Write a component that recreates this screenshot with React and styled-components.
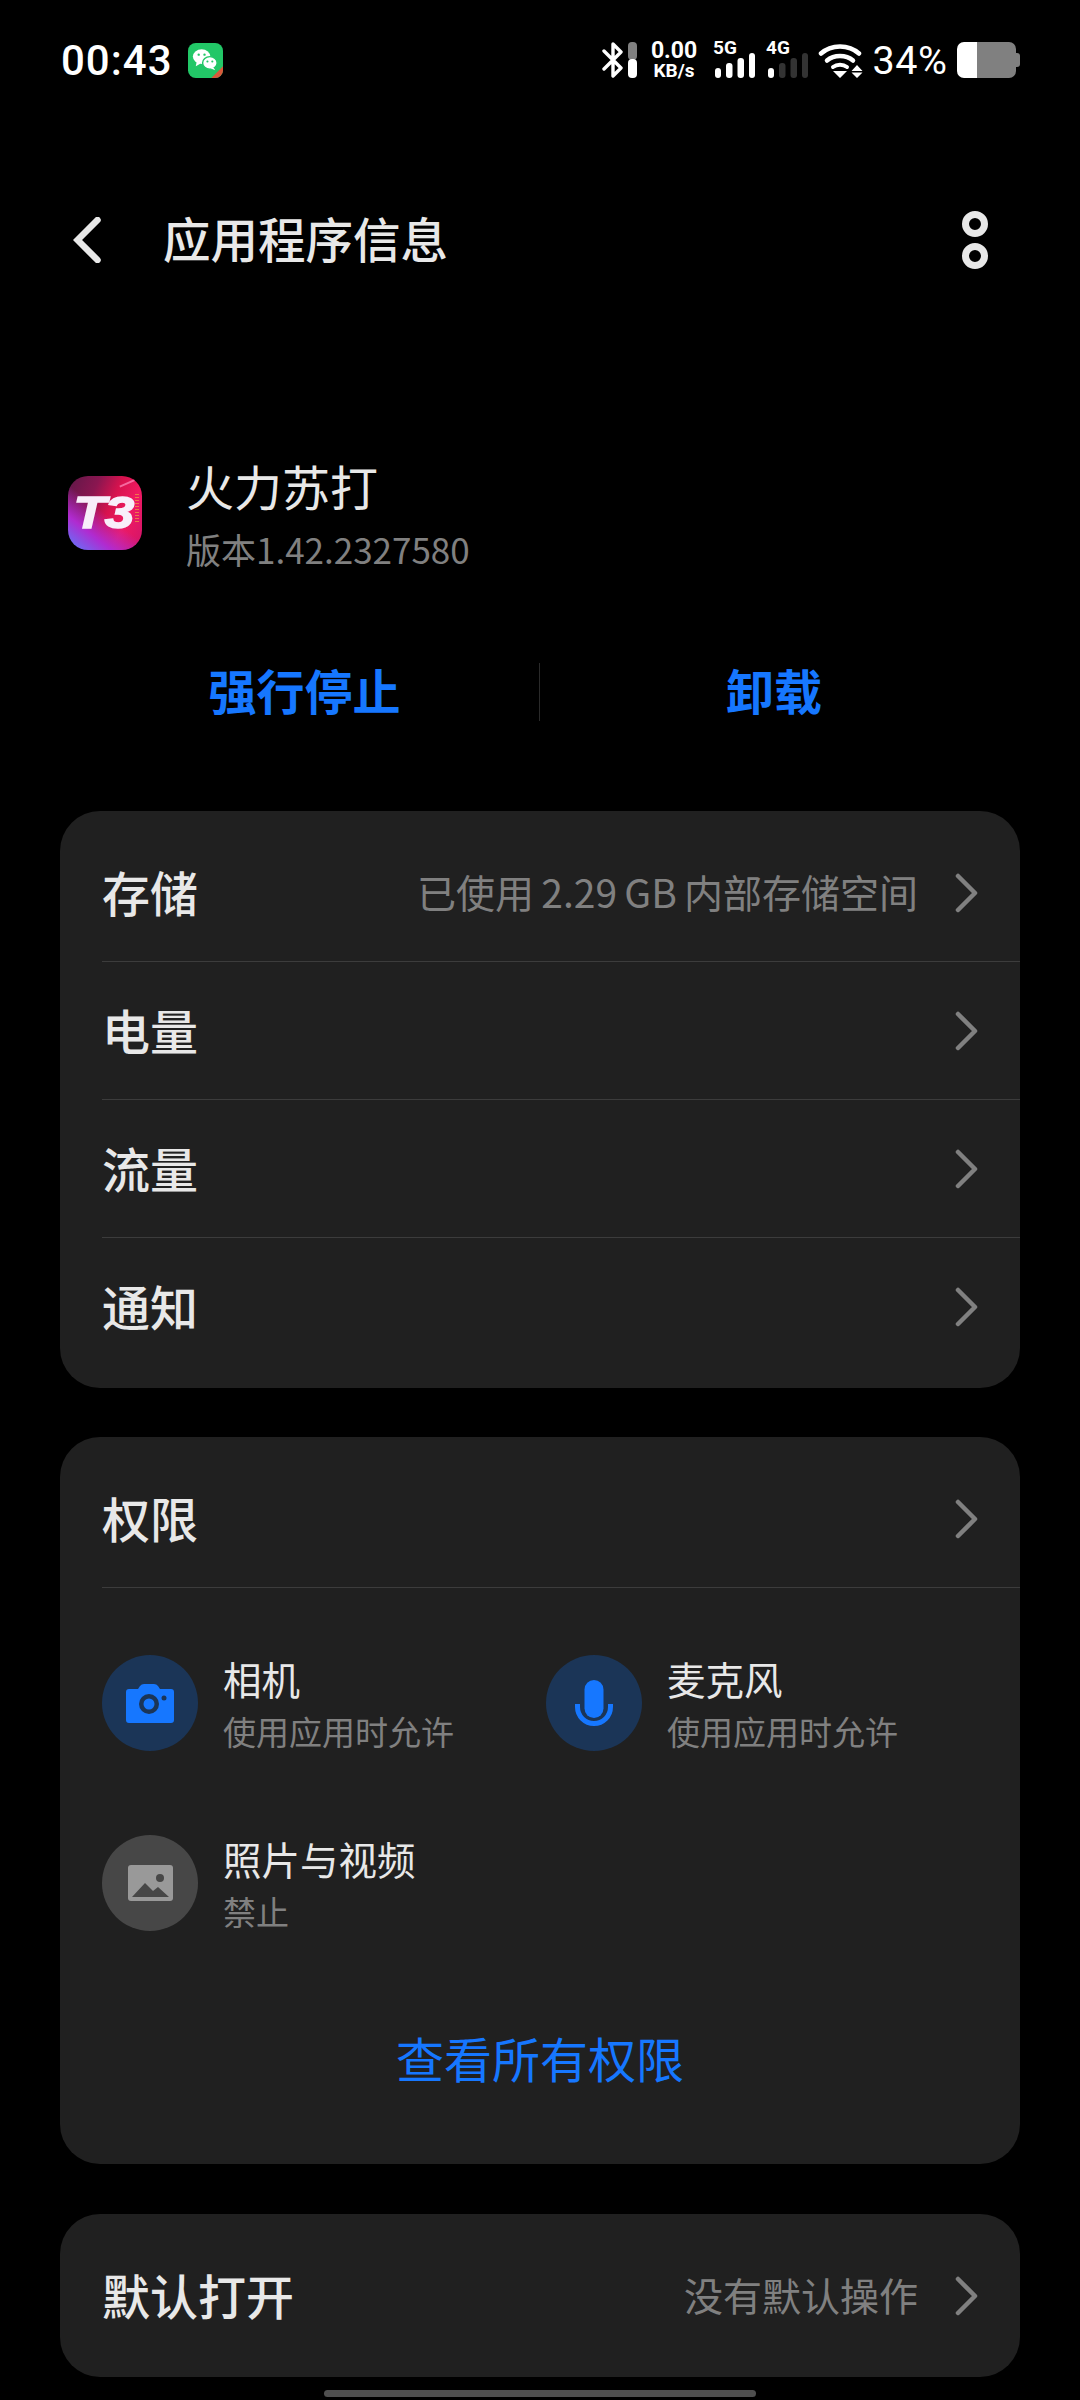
import styled, { createGlobalStyle } from "styled-components";

const CJK = `"Noto Sans CJK SC", "Noto Sans", sans-serif`;
const BLUE = "#1677ff";

const GlobalStyle = createGlobalStyle`
  html, body {
    margin: 0;
    padding: 0;
    background: #000;
  }
  * {
    box-sizing: border-box;
  }
`;

const Page = styled.div`
  position: relative;
  width: 1080px;
  height: 2400px;
  overflow: hidden;
  background: #000;
  color: #e8e8e8;
  font-family: ${CJK};
`;

const StatusBar = styled.div`
  height: 120px;
  padding: 0 60px 0 61px;
  display: flex;
  align-items: center;
`;

const Clock = styled.span`
  font-family: Roboto, sans-serif;
  font-size: 42px;
  font-weight: 500;
  letter-spacing: 1px;
  color: #fff;
`;

const WeChatIcon = styled.svg`
  width: 35px;
  height: 35px;
  margin-left: 15px;
`;

const StatusRight = styled.div`
  margin-left: auto;
  display: flex;
  align-items: center;
`;

const NetSpeed = styled.div`
  width: 46px;
  margin: 0 18px 0 14px;
  display: flex;
  flex-direction: column;
  align-items: center;
  font-family: Roboto, sans-serif;
  font-weight: 700;
  color: #fff;
  span:first-child {
    font-size: 23px;
    line-height: 21px;
  }
  span:last-child {
    font-size: 19px;
    line-height: 19px;
  }
`;

const Signal = styled.div`
  position: relative;
  width: 40px;
  height: 36px;
  margin-right: ${(p) => p.$gap}px;
`;

const SignalLabel = styled.span`
  position: absolute;
  left: -2px;
  top: -3px;
  font-family: Roboto, sans-serif;
  font-size: 19px;
  font-weight: 700;
  line-height: 18px;
  color: #fff;
`;

const SignalBars = styled.svg`
  position: absolute;
  left: 0;
  bottom: 0;
  width: 40px;
  height: 25px;
`;

const Percent = styled.span`
  width: 94px;
  text-align: center;
  font-family: Roboto, sans-serif;
  font-size: 39.500px;
  letter-spacing: 0.6px;
  color: #fff;
`;

const Header = styled.div`
  height: 120px;
  margin-top: 60px;
  padding: 0 92px 0 73px;
  display: flex;
  align-items: center;
`;

const Title = styled.h1`
  margin: 0 0 5px 62px;
  font-size: 47.500px;
  font-weight: 500;
  line-height: 60px;
  color: #e8e8e8;
`;

const MoreIcon = styled.svg`
  width: 26px;
  height: 58px;
  margin-left: auto;
`;

const AppRow = styled.div`
  margin-top: 155px;
  padding-left: 68px;
  display: flex;
  align-items: flex-start;
`;

const AppIcon = styled.div`
  position: relative;
  width: 74px;
  height: 74px;
  margin-top: 21px;
  border-radius: 20px;
  overflow: hidden;
  display: flex;
  align-items: center;
  justify-content: center;
  background:
    linear-gradient(38deg, #5a7cff 0%, #b02bd0 26%, transparent 50%),
    linear-gradient(115deg, #5e1848 0%, #8a1650 30%, #d8124e 52%, #f01a62 72%, #d0146a 100%);
  &::before {
    content: "";
    position: absolute;
    top: 6px;
    right: 5px;
    width: 18px;
    height: 2px;
    background: #ff8fc0;
    opacity: 0.7;
    transform: rotate(-24deg);
  }
  &::after {
    content: "";
    position: absolute;
    top: 18px;
    right: 3px;
    width: 4px;
    height: 28px;
    opacity: 0.7;
    background: repeating-linear-gradient(0deg, #f0a040 0 1px, transparent 1px 3px);
  }
`;

const AppIconText = styled.span`
  position: relative;
  z-index: 1;
  margin-right: 3px;
  font-family: "Liberation Sans", sans-serif;
  font-size: 45px;
  font-weight: 700;
  font-style: italic;
  line-height: 46px;
  letter-spacing: -1px;
  transform: scaleX(1.18);
  color: #f8eefa;
  -webkit-text-stroke: 1.500px #f8eefa;
`;

const AppText = styled.div`
  margin-left: 44px;
  display: flex;
  flex-direction: column;
  gap: 11px;
`;

const AppName = styled.div`
  font-size: 48px;
  line-height: 60px;
  color: #e8e8e8;
`;

const AppVersion = styled.div`
  font-size: 35px;
  line-height: 46px;
  color: #808080;
`;

const Actions = styled.div`
  margin-top: 90px;
  height: 60px;
  display: flex;
  align-items: center;
`;

const ActionButton = styled.div`
  width: ${(p) => p.$width}px;
  height: 60px;
  padding-left: ${(p) => p.$inset}px;
  text-align: center;
  font-size: 48px;
  font-weight: 700;
  line-height: 55px;
  color: ${BLUE};
`;

const ActionDivider = styled.div`
  width: 1px;
  height: 58px;
  background: #2a2a2a;
`;

const Card = styled.section`
  width: 960px;
  margin: ${(p) => p.$top}px 0 0 60px;
  padding: 13px 0 ${(p) => p.$bottom}px;
  border-radius: 40px;
  background: #202020;
`;

const Row = styled.div`
  height: 138px;
  margin-left: 42px;
  padding: 0 41px 4px 0;
  display: flex;
  align-items: center;
  justify-content: space-between;
  border-bottom: ${(p) => (p.$divided ? "1px solid #3c3c3c" : "none")};
`;

const RowLabel = styled.span`
  font-size: 48px;
  font-weight: 500;
  color: #e8e8e8;
`;

const RowRight = styled.div`
  display: flex;
  align-items: center;
`;

const RowValue = styled.span`
  font-size: 39px;
  word-spacing: -1.500px;
  color: #808080;
`;

const Chevron = styled.svg`
  width: 24px;
  height: 40px;
  margin: 4px 0 0 37px;
`;

const PermGrid = styled.div`
  padding: 67px 0 0 42px;
  display: grid;
  grid-template-columns: 444px 444px;
  row-gap: 84px;
`;

const PermItem = styled.div`
  height: 96px;
  display: flex;
  align-items: flex-start;
`;

const PermCircle = styled.div`
  width: 96px;
  height: 96px;
  border-radius: 50%;
  flex-shrink: 0;
  display: flex;
  align-items: center;
  justify-content: center;
  background: ${(p) => (p.$off ? "#474747" : "#1b3557")};
`;

const PermText = styled.div`
  margin-left: 25px;
  display: flex;
  flex-direction: column;
  gap: 7px;
`;

const PermName = styled.div`
  font-size: 38.500px;
  line-height: 46px;
  color: #e8e8e8;
`;

const PermState = styled.div`
  font-size: 33px;
  line-height: 46px;
  color: #808080;
`;

const ViewAll = styled.div`
  margin-top: 96px;
  text-align: center;
  font-size: 48px;
  line-height: 60px;
  color: ${BLUE};
`;

const HomeBar = styled.div`
  position: absolute;
  left: 324px;
  bottom: 3px;
  width: 432px;
  height: 7px;
  border-radius: 4px;
  background: #4f4f4f;
`;

function BackIcon() {
  return (
    <svg width="28" height="46" viewBox="0 0 28 46" fill="none">
      <path d="M24.500 3 4.500 23l20 20" stroke="#e8e8e8" strokeWidth="6.500" strokeLinecap="round" strokeLinejoin="miter" />
    </svg>
  );
}

function BluetoothIcon() {
  return (
    <svg width="35" height="36" viewBox="0 0 35 36" fill="none">
      <path d="M2 9 19 26l-8 8V2l8 8L2 27" stroke="#fff" strokeWidth="3.400" strokeLinecap="round" strokeLinejoin="round" />
      <rect x="26" y="0" width="9" height="18" rx="4" fill="#808080" />
      <rect x="26" y="17" width="9" height="19" rx="4" fill="#fff" />
    </svg>
  );
}

function Bars({ dim }) {
  const rest = dim ? "#333" : "#fff";
  return (
    <SignalBars viewBox="0 0 40 25">
      <rect x="0" y="15" width="6" height="10" rx="3" fill="#fff" />
      <rect x="11" y="10" width="6.500" height="15" rx="3" fill={rest} />
      <rect x="22.500" y="5" width="6.500" height="20" rx="3" fill={rest} />
      <rect x="34" y="0" width="6" height="25" rx="3" fill={rest} />
    </SignalBars>
  );
}

function WifiIcon() {
  return (
    <svg width="45" height="35" viewBox="0 0 45 35" fill="none">
      <path d="M3 10.500C13 1 31 1 41 10.500" stroke="#fff" strokeWidth="4.500" strokeLinecap="round" />
      <path d="M9 17.500c7-6 19-6 26 0" stroke="#fff" strokeWidth="4.500" strokeLinecap="round" />
      <path d="M15 24c4-3 10-3 14 0" stroke="#fff" strokeWidth="4" strokeLinecap="round" />
      <path d="M15 28h14l-7 7zM33.500 28l5.500-6 5.500 6zM33.500 29.500h11L39 35z" fill="#fff" />
    </svg>
  );
}

function BatteryIcon() {
  return (
    <svg width="63" height="36" viewBox="0 0 63 36">
      <path d="M58 11h2a3 3 0 0 1 3 3v8a3 3 0 0 1-3 3h-2z" fill="#808080" />
      <path d="M20 0h32a7 7 0 0 1 7 7v22a7 7 0 0 1-7 7H20z" fill="#808080" />
      <path d="M20 0H7a7 7 0 0 0-7 7v22a7 7 0 0 0 7 7h13z" fill="#fff" />
    </svg>
  );
}

function RowChevron() {
  return (
    <Chevron viewBox="0 0 24 40" fill="none">
      <path d="M3 3 20 20 3 37" stroke="#808080" strokeWidth="4.500" strokeLinecap="round" strokeLinejoin="round" />
    </Chevron>
  );
}

function InfoRow({ label, value, divided }) {
  return (
    <Row $divided={divided}>
      <RowLabel>{label}</RowLabel>
      <RowRight>
        {value && <RowValue>{value}</RowValue>}
        <RowChevron />
      </RowRight>
    </Row>
  );
}

function CameraIcon() {
  return (
    <svg width="48" height="39" viewBox="0 0 48 39">
      <path d="M3 5h9l2-3q1.500-2 4-2h10q2.500 0 4 2l2 3h11q3 0 3 3v28q0 3-3 3H3q-3 0-3-3V8q0-3 3-3z" fill={BLUE} />
      <circle cx="23" cy="20" r="10" fill="#1b3557" />
      <circle cx="23" cy="20" r="5.500" fill={BLUE} />
      <circle cx="38" cy="14" r="2.500" fill="#1b3557" />
    </svg>
  );
}

function MicIcon() {
  return (
    <svg width="38" height="46" viewBox="0 0 38 46" fill="none">
      <rect x="9.500" y="0" width="19" height="38" rx="9.500" fill={BLUE} />
      <path d="M2.500 24v3a16.500 16.500 0 0 0 33 0v-3" stroke={BLUE} strokeWidth="5" />
    </svg>
  );
}

function ImageIcon() {
  return (
    <svg width="45" height="36" viewBox="0 0 45 36">
      <rect width="45" height="36" rx="3" fill="#999" />
      <circle cx="32" cy="13" r="4" fill="#474747" />
      <path d="M4 32 17 18l8 8 5-4 11 10z" fill="#474747" />
    </svg>
  );
}

function Permission({ icon, name, state, off }) {
  return (
    <PermItem>
      <PermCircle $off={off}>{icon}</PermCircle>
      <PermText>
        <PermName>{name}</PermName>
        <PermState>{state}</PermState>
      </PermText>
    </PermItem>
  );
}

export default function App() {
  return (
    <Page>
      <GlobalStyle />
      <StatusBar>
        <Clock>00:43</Clock>
        <WeChatIcon viewBox="0 0 36 36">
          <rect width="36" height="36" rx="8" fill="#22c767" />
          <path d="M24 36h4a8 8 0 0 0 8-8v-4z" fill="#d9583a" />
          <ellipse cx="14" cy="14" rx="9" ry="7.500" fill="#fff" />
          <path d="M9 19l-1 5 5-3z" fill="#fff" />
          <ellipse cx="22.500" cy="20.500" rx="7.500" ry="6.500" fill="#fff" stroke="#22c767" strokeWidth="1.500" />
          <path d="M26 25l2 3-5-2z" fill="#fff" />
          <circle cx="11" cy="12" r="1.200" fill="#22c767" />
          <circle cx="17" cy="12" r="1.200" fill="#22c767" />
          <circle cx="20" cy="19" r="1.100" fill="#22c767" />
          <circle cx="25" cy="19" r="1.100" fill="#22c767" />
        </WeChatIcon>
        <StatusRight>
          <BluetoothIcon />
          <NetSpeed>
            <span>0.00</span>
            <span>KB/s</span>
          </NetSpeed>
          <Signal $gap={13}>
            <SignalLabel>5G</SignalLabel>
            <Bars />
          </Signal>
          <Signal $gap={10}>
            <SignalLabel>4G</SignalLabel>
            <Bars dim />
          </Signal>
          <WifiIcon />
          <Percent>34%</Percent>
          <BatteryIcon />
        </StatusRight>
      </StatusBar>

      <Header>
        <BackIcon />
        <Title>应用程序信息</Title>
        <MoreIcon viewBox="0 0 26 58" fill="none">
          <circle cx="13" cy="13" r="9.500" stroke="#e8e8e8" strokeWidth="7" />
          <circle cx="13" cy="45" r="9.500" stroke="#e8e8e8" strokeWidth="7" />
        </MoreIcon>
      </Header>

      <AppRow>
        <AppIcon>
          <AppIconText>T3</AppIconText>
        </AppIcon>
        <AppText>
          <AppName>火力苏打</AppName>
          <AppVersion>版本1.42.2327580</AppVersion>
        </AppText>
      </AppRow>

      <Actions>
        <ActionButton $width={539} $inset={70}>强行停止</ActionButton>
        <ActionDivider />
        <ActionButton $width={468} $inset={0}>卸载</ActionButton>
      </Actions>

      <Card $top={89} $bottom={12}>
        <InfoRow label="存储" value="已使用 2.29 GB 内部存储空间" divided />
        <InfoRow label="电量" divided />
        <InfoRow label="流量" divided />
        <InfoRow label="通知" />
      </Card>

      <Card $top={49} $bottom={77}>
        <InfoRow label="权限" divided />
        <PermGrid>
          <Permission icon={<CameraIcon />} name="相机" state="使用应用时允许" />
          <Permission icon={<MicIcon />} name="麦克风" state="使用应用时允许" />
          <Permission icon={<ImageIcon />} name="照片与视频" state="禁止" off />
        </PermGrid>
        <ViewAll>查看所有权限</ViewAll>
      </Card>

      <Card $top={50} $bottom={12}>
        <InfoRow label="默认打开" value="没有默认操作" />
      </Card>

      <HomeBar />
    </Page>
  );
}
